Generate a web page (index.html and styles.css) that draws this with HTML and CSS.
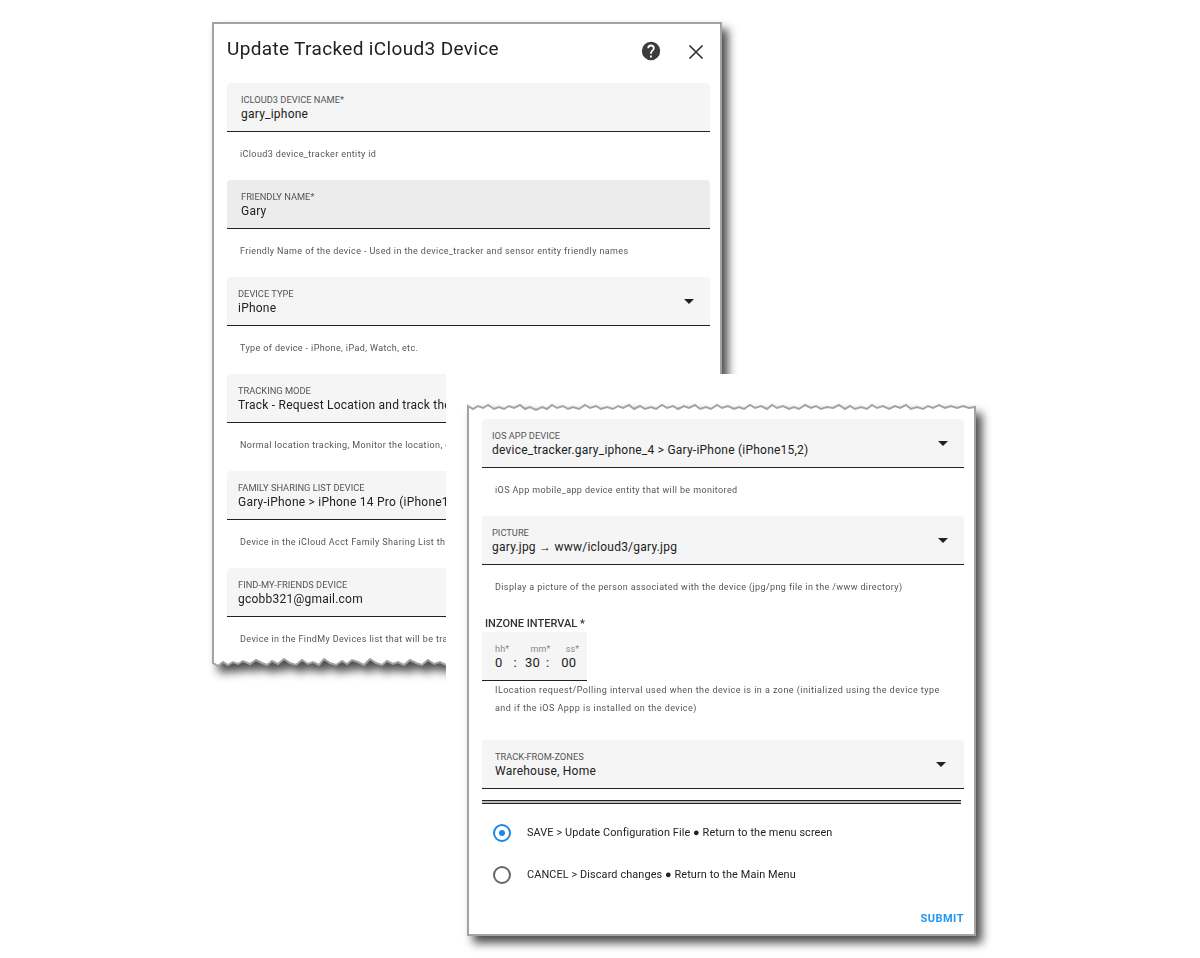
FILE: index.html
```html
<!DOCTYPE html>
<html lang="en">
<head>
    <meta charset="UTF-8">
    <meta name="viewport" content="width=device-width, initial-scale=1.0">
    <title>Update Tracked iCloud3 Device</title>
    <link rel="stylesheet" href="styles.css">
</head>
<body>
    <!-- first screenshot: top of the dialog -->
    <div class="window window-top">
        <svg class="window-edge" width="510" height="646" viewBox="0 0 510 646">
            <path d="M1 1H509V642H240L234 643L228 640L222 642L216 638L210 643L204 641L198 638L192 643L186 640L181 642L175 639L170 643L164 641L158 637L152 643L146 640L140 638L135 642L130 639L124 643L118 641L112 637L107 643L101 640L96 642L90 638L84 643L78 641L72 637L66 642L60 639L55 643L50 641L44 638L38 642L31 639L26 642L21 640L16 643L11 640L6 644L1 641Z"/>
        </svg>
        <div class="dialog-header">
            <h2 class="dialog-title">Update Tracked iCloud3 Device</h2>
            <svg class="icon-help" viewBox="0 0 24 24"><path d="M15.07,11.25L14.17,12.17C13.45,12.89 13,13.5 13,15H11V14.5C11,13.39 11.45,12.39 12.17,11.67L13.41,10.41C13.78,10.05 14,9.55 14,9C14,7.89 13.1,7 12,7A2,2 0 0,0 10,9H8A4,4 0 0,1 12,5A4,4 0 0,1 16,9C16,9.88 15.64,10.67 15.07,11.25M13,19H11V17H13M12,2A10,10 0 0,0 2,12A10,10 0 0,0 12,22A10,10 0 0,0 22,12C22,6.47 17.5,2 12,2Z"/></svg>
            <svg class="icon-close" viewBox="0 0 24 24"><path d="M5.5 5.5L18.5 18.5M18.5 5.5L5.5 18.5"/></svg>
        </div>

        <div class="field text-field">
            <div class="field-text">
                <span class="field-label">iCloud3 device name*</span>
                <span class="field-value">gary_iphone</span>
            </div>
        </div>
        <p class="help">iCloud3 device_tracker entity id</p>

        <div class="field text-field field-hover">
            <div class="field-text">
                <span class="field-label">Friendly name*</span>
                <span class="field-value">Gary</span>
            </div>
        </div>
        <p class="help">Friendly Name of the device - Used in the device_tracker and sensor entity friendly names</p>

        <div class="field">
            <div class="field-text">
                <span class="field-label">Device type</span>
                <span class="field-value">iPhone</span>
            </div>
            <svg class="icon-drop" viewBox="0 0 24 24"><path d="M7,10L12,15L17,10H7Z"/></svg>
        </div>
        <p class="help">Type of device - iPhone, iPad, Watch, etc.</p>

        <div class="field">
            <div class="field-text">
                <span class="field-label">Tracking mode</span>
                <span class="field-value">Track - Request Location and track the device</span>
            </div>
        </div>
        <p class="help">Normal location tracking, Monitor the location, or disable tracking</p>

        <div class="field">
            <div class="field-text">
                <span class="field-label">Family sharing list device</span>
                <span class="field-value">Gary-iPhone &gt; iPhone 14 Pro (iPhone15,2)</span>
            </div>
        </div>
        <p class="help">Device in the iCloud Acct Family Sharing List that will be tracked</p>

        <div class="field">
            <div class="field-text">
                <span class="field-label">Find-my-friends device</span>
                <span class="field-value">gcobb321@gmail.com</span>
            </div>
        </div>
        <p class="help">Device in the FindMy Devices list that will be tracked</p>
    </div>

    <!-- white paper the second screenshot was pasted on -->
    <div class="paste-cover"></div>

    <!-- second screenshot: bottom of the dialog -->
    <div class="window window-bottom">
        <svg class="window-edge" width="509" height="531" viewBox="0 0 509 531">
            <path d="M1 530V1L6 4L11 1L16 3L21 0L27 4L32 2L37 4L42 1L47 3L53 0L58 4L63 2L69 5L75 2L80 4L85 0L90 3L96 1L101 4L106 2L112 4L118 0L123 3L129 1L134 4L140 2L146 4L151 1L156 3L162 0L167 4L173 1L178 4L184 2L189 4L195 0L200 3L206 1L211 4L217 1L222 3L228 0L233 4L239 2L244 4L250 0L255 3L261 1L267 4L272 2L277 4L283 0L288 3L294 1L300 4L305 0L310 3L316 1L322 4L327 2L332 4L338 0L344 3L349 1L354 4L360 2L366 3L372 0L378 4L383 1L388 4L394 2L400 4L405 0L410 3L416 1L422 4L428 1L433 3L439 0L444 4L450 2L456 4L461 1L466 3L472 0L478 3L484 1L490 3L496 1L502 3L508 2V530Z"/>
        </svg>

        <div class="field">
            <div class="field-text">
                <span class="field-label">iOS App device</span>
                <span class="field-value">device_tracker.gary_iphone_4 &gt; Gary-iPhone (iPhone15,2)</span>
            </div>
            <svg class="icon-drop" viewBox="0 0 24 24"><path d="M7,10L12,15L17,10H7Z"/></svg>
        </div>
        <p class="help">iOS App mobile_app device entity that will be monitored</p>

        <div class="field">
            <div class="field-text">
                <span class="field-label">Picture</span>
                <span class="field-value">gary.jpg → www/icloud3/gary.jpg</span>
            </div>
            <svg class="icon-drop" viewBox="0 0 24 24"><path d="M7,10L12,15L17,10H7Z"/></svg>
        </div>
        <p class="help">Display a picture of the person associated with the device (jpg/png file in the /www directory)</p>

        <div class="interval-title">INZONE INTERVAL *</div>
        <div class="interval">
            <div class="interval-labels">
                <span>hh*</span>
                <span class="label-mm">mm*</span>
                <span class="label-ss">ss*</span>
            </div>
            <div class="interval-values">
                <span>0</span>
                <span class="sep-first">:</span>
                <span class="value-mm">30</span>
                <span class="sep-second">:</span>
                <span class="value-ss">00</span>
            </div>
        </div>
        <p class="help help-long">ILocation request/Polling interval used when the device is in a zone (initialized using the device type and if the iOS Appp is installed on the device)</p>

        <div class="field field-zones">
            <div class="field-text">
                <span class="field-label field-label-zones">Track-from-zones</span>
                <span class="field-value field-value-zones">Warehouse, Home</span>
            </div>
            <svg class="icon-drop" viewBox="0 0 24 24"><path d="M7,10L12,15L17,10H7Z"/></svg>
        </div>

        <div class="double-line"></div>

        <div class="radio-row">
            <span class="radio radio-on"></span>
            <span>SAVE &gt; Update Configuration File ● Return to the menu screen</span>
        </div>
        <div class="radio-row">
            <span class="radio"></span>
            <span>CANCEL &gt; Discard changes ● Return to the Main Menu</span>
        </div>

        <div class="actions"><span class="submit">SUBMIT</span></div>
    </div>
</body>
</html>
```

FILE: styles.css
```css
body {
    margin: 0;
    height: 958px;
    overflow: hidden;
    background-color: white;
    font-family: Roboto, sans-serif;
    color: #212121;
    position: relative;
}

/* the windows sit on a free canvas */
.window {
    position: absolute;
    box-sizing: border-box;
}

.window > * {
    position: relative;
}

.window-top {
    left: 212px;
    top: 22px;
    width: 510px;
    height: 646px;
    padding: 0 12px 0 15px;
    filter: blur(0.2px);
}

.window-bottom {
    left: 467px;
    top: 405px;
    width: 509px;
    height: 531px;
    padding: 14px 12px 0 15px;
    filter: blur(0.4px);
}

.window > .window-edge {
    position: absolute;
    left: 0;
    top: 0;
    overflow: visible;
    filter: drop-shadow(6px 7px 5px rgba(0, 0, 0, 0.7));
}

.window-edge path {
    fill: white;
    stroke: #a3a3a3;
    stroke-width: 2;
}

.paste-cover {
    position: absolute;
    left: 446px;
    top: 374px;
    width: 554px;
    height: 584px;
    background-color: white;
}

.dialog-header {
    display: flex;
    align-items: center;
    height: 61px;
}

.dialog-title {
    flex: 1;
    margin: 0 0 8px 0;
    font-size: 19px;
    font-weight: 400;
    letter-spacing: 0.35px;
    color: #212121;
}

.icon-help {
    width: 22px;
    height: 22px;
    margin: 0 22px 4px 0;
    fill: #3c3c3c;
}

.icon-close {
    width: 24px;
    height: 24px;
    margin: 0 2px 2px 0;
    fill: none;
    stroke: #333;
    stroke-width: 1.7;
}

.field {
    display: flex;
    align-items: center;
    box-sizing: border-box;
    height: 49px;
    padding: 0 9px 0 11px;
    background-color: #f5f5f5;
    border-bottom: 1px solid #222;
    border-radius: 4px 4px 0 0;
}

.window-bottom .field {
    padding-left: 10px;
}

.window-bottom .field-zones {
    padding-right: 11px;
}

.field-hover {
    background-color: #ececec;
}

.window .text-field {
    padding-left: 14px;
}

.field-text {
    flex: 1;
    display: flex;
    flex-direction: column;
    padding-top: 2px;
}

.field-label {
    font-size: 9.3px;
    line-height: 12px;
    text-transform: uppercase;
    color: #555;
}

.field-value {
    font-size: 12px;
    line-height: 16px;
    letter-spacing: 0.23px;
    white-space: nowrap;
    color: #212121;
}

.field-label-zones,
.field-value-zones {
    margin-left: 3px;
}

.icon-drop {
    width: 24px;
    height: 24px;
    fill: #212121;
}

.help {
    box-sizing: border-box;
    height: 48px;
    margin: 0;
    padding: 15px 13px 0 13px;
    font-size: 9px;
    line-height: 14px;
    letter-spacing: 0.38px;
    color: #555;
}

.window .help-long {
    height: 36px;
    padding: 0 20px 0 13px;
    line-height: 18px;
    letter-spacing: 0.46px;
}

.interval-title {
    height: 19px;
    padding-left: 3px;
    font-size: 11px;
    font-weight: 500;
    line-height: 21px;
    color: #333;
}

.interval {
    box-sizing: border-box;
    width: 105px;
    height: 49px;
    padding: 11px 0 0 13px;
    background-color: #f5f5f5;
    border-bottom: 1px solid #222;
}

.interval-labels {
    display: flex;
    font-size: 9px;
    line-height: 12px;
    letter-spacing: 0.2px;
    color: #888;
}

.label-mm {
    margin-left: 21px;
}

.label-ss {
    margin-left: 15px;
}

.interval-values {
    display: flex;
    font-size: 13px;
    line-height: 16px;
    letter-spacing: 0.2px;
}

.sep-first {
    margin-left: 11px;
}

.value-mm {
    margin-left: 8px;
}

.sep-second {
    margin-left: 6px;
}

.value-ss {
    margin-left: 12px;
}

.window-bottom .field + .double-line {
    margin-top: 11px;
}

.window-bottom .help-long + .field {
    margin-top: 23px;
}

.double-line {
    height: 2px;
    width: 479px;
    background-color: #bbb;
    border-top: 1px solid #222;
    border-bottom: 1px solid #222;
}

.radio-row {
    display: flex;
    align-items: center;
    height: 42px;
    padding-left: 11px;
    font-size: 10.9px;
    letter-spacing: 0.1px;
    color: #222;
}

.double-line + .radio-row {
    margin-top: 7px;
}

.radio {
    position: relative;
    box-sizing: border-box;
    width: 18px;
    height: 18px;
    margin: 1px 16px 0 0;
    border: 2px solid #666;
    border-radius: 50%;
}

.radio-on {
    border-color: #1e88e5;
}

.radio-on::after {
    content: "";
    position: absolute;
    left: 4px;
    top: 4px;
    width: 6px;
    height: 6px;
    border-radius: 50%;
    background-color: #1e88e5;
}

.actions {
    display: flex;
    justify-content: flex-end;
    margin-top: 17px;
}

.submit {
    font-size: 11px;
    font-weight: 700;
    letter-spacing: 0.5px;
    color: #2196f3;
}
```
